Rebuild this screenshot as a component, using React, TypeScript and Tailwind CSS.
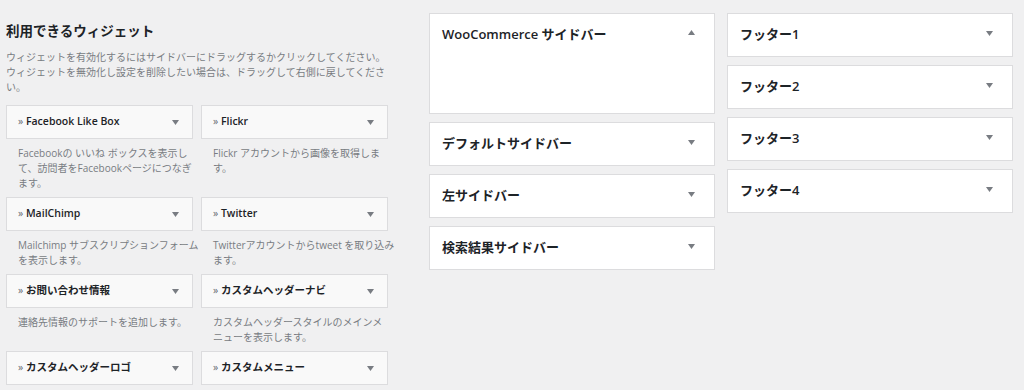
import React from "react";

type Widget = { name: string; desc: string[] };

const widgets: Widget[] = [
  { name: "Facebook Like Box", desc: ["Facebookの いいね ボックスを表示し", "て、訪問者をFacebookページにつなぎ", "ます。"] },
  { name: "Flickr", desc: ["Flickr アカウントから画像を取得しま", "す。"] },
  { name: "MailChimp", desc: ["Mailchimp サブスクリプションフォーム", "を表示します。"] },
  { name: "Twitter", desc: ["Twitterアカウントからtweet を取り込み", "ます。"] },
  { name: "お問い合わせ情報", desc: ["連絡先情報のサポートを追加します。"] },
  { name: "カスタムヘッダーナビ", desc: ["カスタムヘッダースタイルのメインメ", "ニューを表示します。"] },
  { name: "カスタムヘッダーロゴ", desc: [] },
  { name: "カスタムメニュー", desc: [] },
];

const middle = ["デフォルトサイドバー", "左サイドバー", "検索結果サイドバー"];
const footers = ["フッター1", "フッター2", "フッター3", "フッター4"];

function Arrow({ up = false }: { up?: boolean }) {
  return (
    <svg width="7" height="5" viewBox="0 0 7 5" className="shrink-0">
      {up ? (
        <polygon points="0,5 7,5 3.5,0" fill="#787c82" />
      ) : (
        <polygon points="0,0 7,0 3.5,5" fill="#787c82" />
      )}
    </svg>
  );
}

function SidebarBox({ title, open = false }: { title: string; open?: boolean }) {
  return (
    <div className="bg-white border border-[#dcdcde]">
      <div className="h-[42px] flex items-center justify-between pl-[12px] pr-[19px]">
        <span className="text-[13px] font-semibold text-[#1d2327]">{title}</span>
        <div className={open ? "mb-[6px]" : "mb-[4px]"}>
          <Arrow up={open} />
        </div>
      </div>
      {open && <div className="h-[57px]" />}
    </div>
  );
}

export default function App() {
  return (
    <div className="min-h-screen bg-[#f0f0f1] flex pl-[6px] pt-[13px] font-['Open_Sans','Noto_Sans_CJK_JP',sans-serif]">
      {/* 利用できるウィジェット */}
      <div className="w-[382px] shrink-0">
        <h2 className="mt-[9px] text-[13.5px] leading-[18px] font-bold text-[#1d2327]">
          利用できるウィジェット
        </h2>
        <p className="mt-[10px] text-[10px] leading-[15px] text-[#787c82]">
          ウィジェットを有効化するにはサイドバーにドラッグするかクリックしてください。
          <br />
          ウィジェットを無効化し設定を削除したい場合は、ドラッグして右側に戻してください。
        </p>
        <div className="mt-[10px] grid grid-cols-2 gap-x-[8px]">
          {widgets.map((w) => (
            <div key={w.name}>
              <div className="h-[34px] bg-[#f9f9f9] border border-[#dcdcde] flex items-center justify-between pl-[11px] pr-[13px]">
                <span className="text-[10.5px] font-semibold text-[#1d2327] whitespace-nowrap">
                  <span className="text-[#646970] font-normal">» </span>
                  {w.name}
                </span>
                <Arrow />
              </div>
              {w.desc.length > 0 && (
                <div className="px-[12px] pt-[7px] pb-[6px] text-[10px] leading-[15px] text-[#787c82] whitespace-nowrap">
                  {w.desc.map((l) => (
                    <div key={l}>{l}</div>
                  ))}
                </div>
              )}
            </div>
          ))}
        </div>
      </div>

      {/* サイドバー */}
      <div className="ml-[41px] w-[286px] shrink-0 flex flex-col gap-[8px]">
        <SidebarBox title="WooCommerce サイドバー" open />
        {middle.map((t) => (
          <SidebarBox key={t} title={t} />
        ))}
      </div>

      {/* フッター */}
      <div className="ml-[12px] w-[286px] shrink-0 flex flex-col gap-[8px]">
        {footers.map((t) => (
          <SidebarBox key={t} title={t} />
        ))}
      </div>
    </div>
  );
}
